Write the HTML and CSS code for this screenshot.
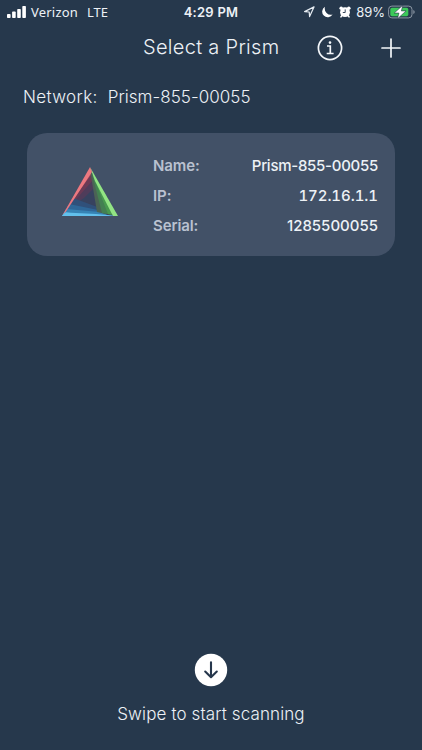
FILE: index.html
```
<!DOCTYPE html>
<html lang="en">
<head>
  <meta charset="UTF-8" />
  <meta name="viewport" content="width=device-width, initial-scale=1.0"/>
  <title>Select a Prism</title>
  <link rel="stylesheet" href="styles.css">
</head>
<body>

  <!-- Status bar -->
  <div class="status-bar">
    <div class="status-left">
      <svg class="signal" width="19" height="12" viewBox="0 0 19 12" fill="#fff">
        <rect x="0" y="8" width="3.6" height="4" rx="0.8"/>
        <rect x="5.1" y="5.5" width="3.6" height="6.5" rx="0.8"/>
        <rect x="10.2" y="3" width="3.6" height="9" rx="0.8"/>
        <rect x="15.3" y="0" width="3.6" height="12" rx="0.8"/>
      </svg>
      <span class="carrier">Verizon</span>
      <span class="lte">LTE</span>
    </div>
    <div class="clock">4:29 PM</div>
    <div class="status-right">
      <svg width="12" height="12" viewBox="0 0 12 12" fill="none" stroke="#e6ecf2" stroke-width="1.2" stroke-linejoin="round">
        <path d="M11 0.9 L1.6 5.6 L6.2 6 L6.6 10.6 Z"/>
      </svg>
      <svg class="moon" width="12" height="12" viewBox="0 0 12 12" fill="#fff">
        <path d="M4 0.8 A5.6 5.6 0 1 0 11.6 8.5 A6.2 6.2 0 0 1 4 0.8 Z"/>
      </svg>
      <svg class="alarm" width="12" height="12" viewBox="0 0 12 12">
        <g fill="#fff">
          <circle cx="2.2" cy="2.2" r="1.8"/>
          <circle cx="9.8" cy="2.2" r="1.8"/>
          <circle cx="6" cy="6.2" r="4.9"/>
        </g>
        <path d="M2 10.8 L3 9.6 M10 10.8 L9 9.6" stroke="#fff" stroke-width="1.6" stroke-linecap="round"/>
        <path d="M6.2 3.4 V6.5 H3.8" fill="none" stroke="#26374c" stroke-width="0.9"/>
      </svg>
      <span class="percent">89%</span>
      <svg class="battery" width="27" height="14" viewBox="0 0 27 14">
        <rect x="0.6" y="1.1" width="23.4" height="11.8" rx="3.3" fill="none" stroke="#8b96a3"/>
        <path d="M25.3 5 Q26.7 5.4 26.7 7 Q26.7 8.6 25.3 9 Z" fill="#8b96a3"/>
        <rect x="2.3" y="2.8" width="18" height="8.4" rx="1.8" fill="#3bc859"/>
        <path d="M14.8 0.2 L6.2 8.1 H10.9 L9.5 13.8 L18.1 5.9 H13.4 Z" fill="#fff" stroke="#26374c" stroke-width="0.6"/>
      </svg>
    </div>
  </div>

  <!-- Title bar -->
  <div class="title-bar">
    <h1>Select a Prism</h1>
    <div class="actions">
      <svg width="26" height="26" viewBox="0 0 26 26" fill="none" stroke="#f4f7fa" stroke-width="1.7">
        <circle cx="13" cy="13" r="11.6"/>
        <path d="M10 11 H13.3 V18.3 M9.7 18.5 H16.6"/>
        <circle cx="13" cy="7.6" r="1.3" fill="#f4f7fa" stroke="none"/>
      </svg>
      <svg width="20" height="20" viewBox="0 0 20 20" stroke="#f4f7fa" stroke-width="1.7" stroke-linecap="round">
        <path d="M10 1 V19 M1 10 H19"/>
      </svg>
    </div>
  </div>

  <div class="network">
    <span class="network-label">Network:</span>
    <span class="network-name">Prism-855-00055</span>
  </div>

  <!-- Prism card -->
  <div class="card">
    <svg class="prism" width="56" height="50" viewBox="0 0 56 50">
      <path d="M28 0 L0 49 H56 Z" fill="#37425f"/>
      <!-- red side -->
      <path d="M28 2 L4 43 L22 31 L33 20 Z" fill="#4f3c5a"/>
      <path d="M28 2 L3 44 L17 29 L31 13 Z" fill="#6b3a55"/>
      <path d="M28 2 L2 46 L11 32 L29 8 Z" fill="#9c4257"/>
      <!-- blue side -->
      <path d="M11 31 L38 41 L42 47 H1 Z" fill="#30507a"/>
      <path d="M7 37 L36 43 L44 48 H1 Z" fill="#2f6798"/>
      <path d="M4 42 L38 45 L48 49 H0 Z" fill="#3784b5"/>
      <!-- green side -->
      <path d="M28 3 L35 45 L44 47 L42 28 Z" fill="#4b6355"/>
      <path d="M30 7 L40 46 L50 48 L44 28 Z" fill="#438052"/>
      <path d="M32 11 L46 47 L55 48 Z" fill="#48994f"/>
      <!-- bright edges -->
      <path d="M0 49 L4 45.5 L34 47 L56 49 Z" fill="#62c0ec"/>
      <path d="M28 0 L56 49 H51 L33 14 Z" fill="#92e484"/>
      <path d="M28 0 L0 49 L4 44.5 L30 5 Z" fill="#ec7980"/>
      <path d="M0 49 L3 45.5 L9 46 L14 49 Z" fill="#62c0ec"/>
    </svg>
    <div class="details">
      <div class="row"><span class="label">Name:</span><span class="value">Prism-855-00055</span></div>
      <div class="row"><span class="label">IP:</span><span class="value ip">172.16.1.1</span></div>
      <div class="row"><span class="label">Serial:</span><span class="value serial">1285500055</span></div>
    </div>
  </div>

  <!-- Scan hint -->
  <div class="scan">
    <svg width="34" height="34" viewBox="0 0 34 34">
      <circle cx="17" cy="17" r="16.2" fill="#fff"/>
      <path d="M17 9.2 V24 M11.2 18.6 L17 24.2 L22.8 18.6" fill="none" stroke="#26374c" stroke-width="2.1" stroke-linecap="round" stroke-linejoin="round"/>
    </svg>
    <p>Swipe to start scanning</p>
  </div>

</body>
</html>
```
FILE: styles.css
```
* {
  box-sizing: border-box;
}

body {
  margin: 0;
  height: 750px;
  display: flex;
  flex-direction: column;
  background: #26384c;
  color: #edf1f6;
  font-family: Inter, 'Liberation Sans', sans-serif;
  overflow: hidden;
  white-space: nowrap;
}

svg {
  display: block;
  flex: none;
}

.status-bar {
  height: 24px;
  padding: 0 7px;
  display: grid;
  grid-template-columns: 1fr auto 1fr;
  align-items: center;
  font-size: 13px;
}

.status-left,
.status-right {
  display: flex;
  align-items: center;
}

.status-right {
  justify-content: flex-end;
}

.carrier {
  margin-left: 5px;
  font-family: 'Noto Sans', sans-serif;
  letter-spacing: 0.2px;
}

.lte {
  margin-left: 9px;
  font-family: 'Noto Sans', sans-serif;
}

.clock {
  font-weight: 600;
  letter-spacing: 0.25px;
}

.moon {
  margin-left: 6px;
}

.alarm {
  margin-left: 6px;
}

.percent {
  margin: 0 3px 0 5px;
}

.title-bar {
  height: 47px;
  padding: 0 21px 0 143px;
  display: flex;
  align-items: center;
  justify-content: space-between;
}

h1 {
  margin: 0 0 2px;
  font-size: 20px;
  font-weight: 300;
  letter-spacing: 0.3px;
}

.actions {
  display: flex;
  align-items: center;
  gap: 38px;
}

.network {
  height: 52px;
  padding-left: 23px;
  display: flex;
  align-items: center;
  gap: 10px;
  font-size: 17px;
  font-weight: 300;
}

.network-label {
  letter-spacing: 0.35px;
}

.network-name {
  letter-spacing: 0.05px;
}

.card {
  width: 368px;
  height: 123px;
  margin: 10px 0 0 27px;
  padding: 0 17px 0 35px;
  display: flex;
  align-items: center;
  background: #425167;
  border-radius: 20px;
}

.prism {
  margin-top: -5px;
}

.details {
  flex: 1;
  margin: 1px 0 0 35px;
}

.row {
  height: 30px;
  display: flex;
  align-items: center;
  justify-content: space-between;
  font-size: 15px;
}

.label {
  color: #b9c1d0;
  font-weight: 600;
  letter-spacing: -0.1px;
}

.value {
  font-weight: 500;
  letter-spacing: -0.27px;
}

.ip {
  font-variant-numeric: tabular-nums;
  letter-spacing: -0.05px;
}

.serial {
  letter-spacing: 0;
}

.scan {
  margin-top: auto;
  padding-bottom: 24px;
  display: flex;
  flex-direction: column;
  align-items: center;
}

.scan p {
  margin: 15px 0 0;
  font-size: 17px;
  line-height: 24px;
  font-weight: 300;
  letter-spacing: 0.12px;
}
```
